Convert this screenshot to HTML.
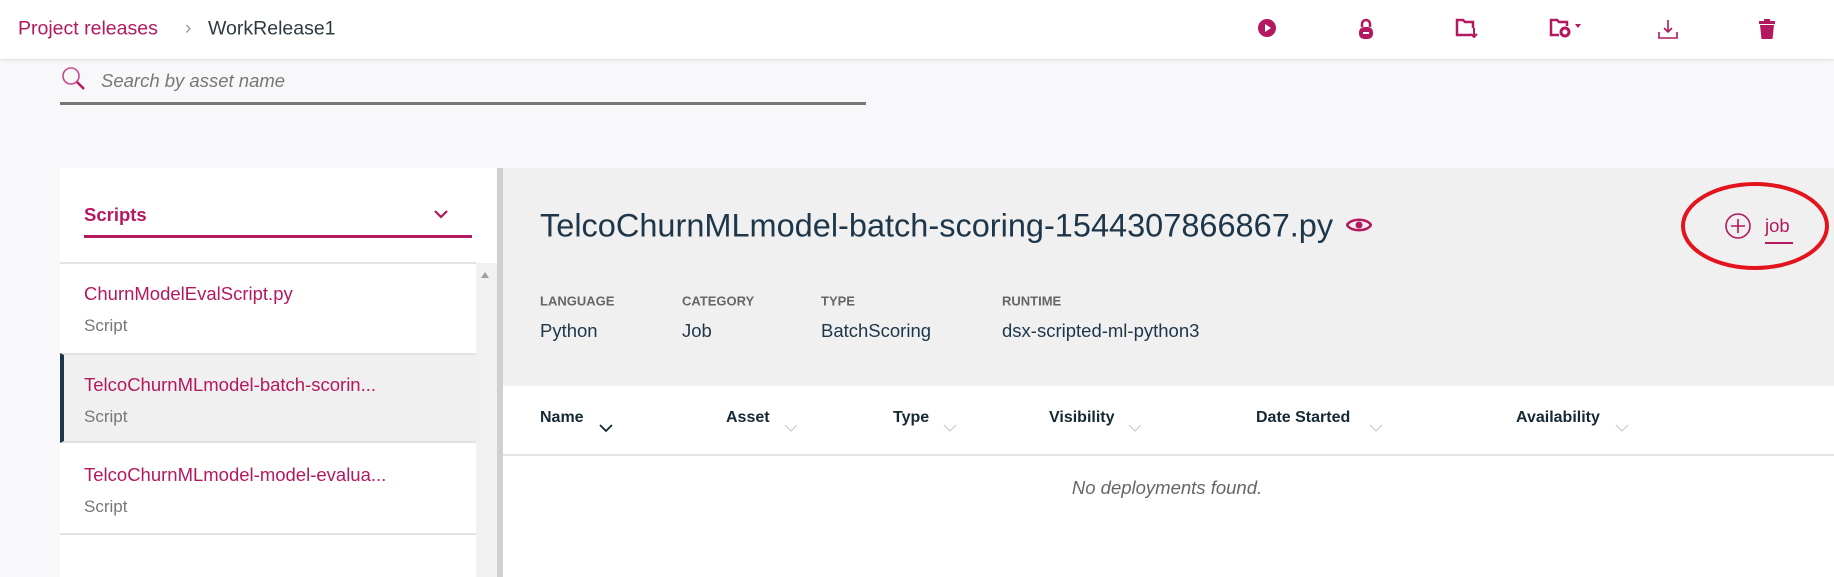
<!DOCTYPE html>
<html><head><meta charset="utf-8"><style>
*{margin:0;padding:0;box-sizing:border-box}
body{width:1834px;height:577px;overflow:hidden;background:#f8f8fa;font-family:"Liberation Sans",sans-serif;position:relative;color:#152935}
.a{position:absolute;white-space:nowrap}
.m{color:#b4185f}
.hdr{position:absolute;left:0;top:0;width:1834px;height:59px;background:#fff;box-shadow:0 1px 3px rgba(0,0,0,.12)}
.ic{position:absolute;top:18px}
.v{transform:translateY(-50%)}
</style></head><body>
<div class="hdr"></div>
<div class="a v m" style="left:18px;top:29px;font-size:19.5px">Project releases</div>
<div class="a v" style="left:185px;top:29px;font-size:19px;color:#999">›</div>
<div class="a v" style="left:208px;top:29px;font-size:19.5px;color:#2d3a40">WorkRelease1</div>
<!-- toolbar icons -->
<svg class="ic" style="left:1257px" width="20" height="20" viewBox="0 0 20 20"><circle cx="10" cy="10" r="9" fill="#b4185f"/><path d="M8 6l6 4-6 4z" fill="#fff"/></svg>
<svg class="ic" style="left:1357px" width="18" height="22" viewBox="0 0 18 22"><path d="M5 9V6a4 4 0 018 0v3" fill="none" stroke="#b4185f" stroke-width="2.5"/><rect x="2" y="9" width="14" height="12" rx="5" fill="#b4185f"/><rect x="6" y="14" width="6" height="2" fill="#fff"/></svg>
<svg class="ic" style="left:1455px" width="24" height="22" viewBox="0 0 24 22"><path d="M16 17H2V2h6l2 2h8v6" fill="none" stroke="#b4185f" stroke-width="2.5"/><path d="M19 10v9m-3-3l3 3 3-3" fill="none" stroke="#b4185f" stroke-width="2"/></svg>
<svg class="ic" style="left:1549px" width="34" height="22" viewBox="0 0 34 22"><path d="M10 17H2V2h6l2 2h8v4" fill="none" stroke="#b4185f" stroke-width="2.5"/><circle cx="16" cy="14" r="4" fill="none" stroke="#b4185f" stroke-width="3"/><path d="M26 6h6l-3 4z" fill="#b4185f"/></svg>
<svg class="ic" style="left:1657px" width="22" height="22" viewBox="0 0 22 22"><path d="M11 2v12m-4-4l4 4 4-4" fill="none" stroke="#b4185f" stroke-width="1.6"/><path d="M2 14v6h18v-6" fill="none" stroke="#b4185f" stroke-width="1.6"/></svg>
<svg class="ic" style="left:1757px" width="20" height="22" viewBox="0 0 20 22"><rect x="2" y="3" width="16" height="3" fill="#b4185f"/><rect x="7" y="1" width="6" height="3" fill="#b4185f"/><path d="M3 7h14l-1.5 14h-11z" fill="#b4185f"/></svg>
<!-- search -->
<svg class="a" style="left:61px;top:66px" width="26" height="26" viewBox="0 0 26 26"><circle cx="10" cy="10" r="8" fill="none" stroke="#c8478a" stroke-width="1.6"/><path d="M16 16l7 7" stroke="#b4185f" stroke-width="2.5"/></svg>
<div class="a v" style="left:101px;top:81px;font-size:18.5px;font-style:italic;color:#777">Search by asset name</div>
<div class="a" style="left:60px;top:102px;width:806px;height:3px;background:#777"></div>
<!-- left panel -->
<div class="a" style="left:60px;top:168px;width:437px;height:409px;background:#fff"></div>
<div class="a" style="left:476px;top:263px;width:21px;height:314px;background:#f1f1f1"></div>
<svg class="a" style="left:480px;top:271px" width="10" height="8"><path d="M1 7h8L5 1z" fill="#a0a0a0"/></svg>
<div class="a" style="left:497px;top:168px;width:6px;height:409px;background:#d0d0d0"></div>
<div class="a v m" style="left:84px;top:215px;font-size:18.5px;font-weight:bold">Scripts</div>
<svg class="a" style="left:433px;top:209px" width="16" height="11"><path d="M2 2l6 6 6-6" fill="none" stroke="#b4185f" stroke-width="2.2"/></svg>
<div class="a" style="left:84px;top:235px;width:388px;height:3px;background:#b4185f"></div>
<div class="a" style="left:60px;top:262px;width:416px;height:2px;background:#e2e2e2"></div>
<div class="a v m" style="left:84px;top:294px;font-size:18.5px">ChurnModelEvalScript.py</div>
<div class="a v" style="left:84px;top:326px;font-size:17px;color:#777">Script</div>
<div class="a" style="left:60px;top:353px;width:416px;height:90px;background:#f0f0f0;border-top:2px solid #e2e2e2;border-bottom:2px solid #e2e2e2;border-left:4px solid #1d3649"></div>
<div class="a v m" style="left:84px;top:385px;font-size:18.5px">TelcoChurnMLmodel-batch-scorin...</div>
<div class="a v" style="left:84px;top:417px;font-size:17px;color:#777">Script</div>
<div class="a v m" style="left:84px;top:475px;font-size:18.5px">TelcoChurnMLmodel-model-evalua...</div>
<div class="a v" style="left:84px;top:507px;font-size:17px;color:#777">Script</div>
<div class="a" style="left:60px;top:533px;width:416px;height:2px;background:#e2e2e2"></div>
<!-- right panel -->
<div class="a" style="left:503px;top:168px;width:1331px;height:218px;background:#f0f0f0"></div>
<div class="a" style="left:503px;top:386px;width:1331px;height:191px;background:#fff"></div>
<div class="a v" style="left:540px;top:226px;font-size:32.5px;color:#1d3649">TelcoChurnMLmodel-batch-scoring-1544307866867.py</div>
<svg class="a" style="left:1346px;top:215px" width="26" height="20" viewBox="0 0 26 20"><path d="M1 10C5 3 21 3 25 10 21 17 5 17 1 10z" fill="none" stroke="#b4185f" stroke-width="2.5"/><circle cx="13" cy="10" r="3.5" fill="#b4185f"/></svg>
<svg class="a" style="left:1724px;top:212px" width="28" height="28" viewBox="0 0 28 28"><circle cx="14" cy="14" r="12" fill="none" stroke="#b4185f" stroke-width="1.6"/><path d="M14 7v14M7 14h14" stroke="#b4185f" stroke-width="1.6"/></svg>
<div class="a v m" style="left:1765px;top:226px;font-size:18.5px">job</div>
<div class="a" style="left:1765px;top:242px;width:28px;height:1.5px;background:#b4185f"></div>
<svg class="a" style="left:1678px;top:180px" width="156" height="94"><ellipse cx="77" cy="46" rx="72" ry="42" fill="none" stroke="#e4141e" stroke-width="4"/></svg>
<div class="a v" style="left:540px;top:301px;font-size:13px;font-weight:bold;color:#666">LANGUAGE</div>
<div class="a v" style="left:682px;top:301px;font-size:13px;font-weight:bold;color:#666">CATEGORY</div>
<div class="a v" style="left:821px;top:301px;font-size:13px;font-weight:bold;color:#666">TYPE</div>
<div class="a v" style="left:1002px;top:301px;font-size:13px;font-weight:bold;color:#666">RUNTIME</div>
<div class="a v" style="left:540px;top:331px;font-size:18.5px;color:#1d3649">Python</div>
<div class="a v" style="left:682px;top:331px;font-size:18.5px;color:#1d3649">Job</div>
<div class="a v" style="left:821px;top:331px;font-size:18.5px;color:#1d3649">BatchScoring</div>
<div class="a v" style="left:1002px;top:331px;font-size:18.5px;color:#1d3649">dsx-scripted-ml-python3</div>
<div class="a v" style="left:540px;top:418px;font-size:16px;font-weight:bold">Name</div>
<svg class="a" style="left:599px;top:424px" width="14" height="9"><path d="M1 1l6 6 6-6" fill="none" stroke="#152935" stroke-width="1.8"/></svg>
<div class="a v" style="left:726px;top:418px;font-size:16px;font-weight:bold">Asset</div>
<div class="a v" style="left:893px;top:418px;font-size:16px;font-weight:bold">Type</div>
<div class="a v" style="left:1049px;top:418px;font-size:16px;font-weight:bold">Visibility</div>
<div class="a v" style="left:1256px;top:418px;font-size:16px;font-weight:bold">Date Started</div>
<div class="a v" style="left:1516px;top:418px;font-size:16px;font-weight:bold">Availability</div>
<svg class="a" style="left:784px;top:424px" width="14" height="9"><path d="M1 1l6 6 6-6" fill="none" stroke="#d0d0d0" stroke-width="1.3"/></svg>
<svg class="a" style="left:943px;top:424px" width="14" height="9"><path d="M1 1l6 6 6-6" fill="none" stroke="#d0d0d0" stroke-width="1.3"/></svg>
<svg class="a" style="left:1128px;top:424px" width="14" height="9"><path d="M1 1l6 6 6-6" fill="none" stroke="#d0d0d0" stroke-width="1.3"/></svg>
<svg class="a" style="left:1369px;top:424px" width="14" height="9"><path d="M1 1l6 6 6-6" fill="none" stroke="#d0d0d0" stroke-width="1.3"/></svg>
<svg class="a" style="left:1615px;top:424px" width="14" height="9"><path d="M1 1l6 6 6-6" fill="none" stroke="#d0d0d0" stroke-width="1.3"/></svg>
<div class="a" style="left:503px;top:454px;width:1331px;height:2px;background:#e4e4e4"></div>
<div class="a v" style="left:1167px;top:488px;transform:translate(-50%,-50%);font-size:18.5px;font-style:italic;color:#666">No deployments found.</div>
</body></html>
